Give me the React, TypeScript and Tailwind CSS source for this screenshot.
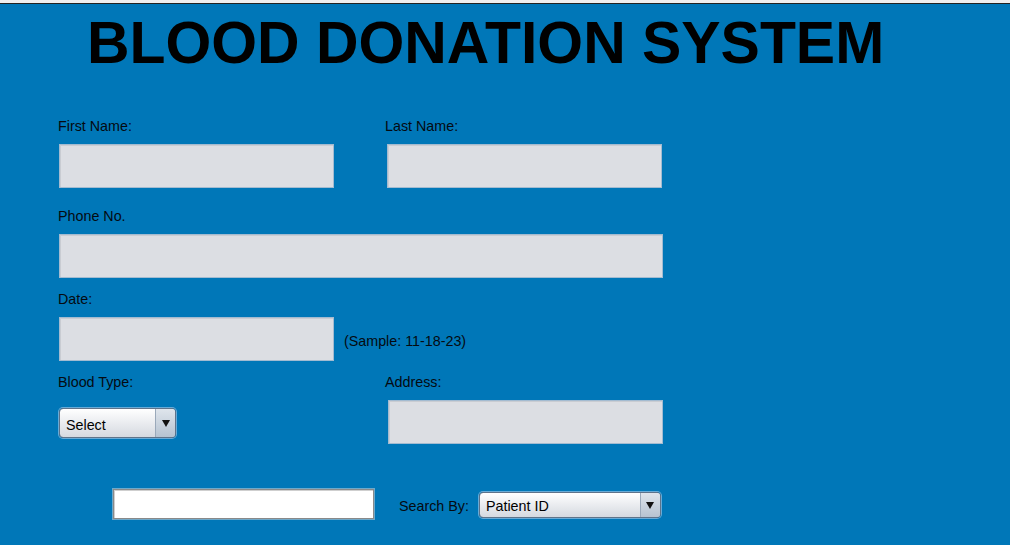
const field =
  "bg-[#dcdee3] border border-[#a3bbd1] shadow-[inset_1px_1px_0_#c9ccd2]";

function Label({ text }: { text: string }) {
  return <p className="h-4 text-[14.3px] leading-4 text-[#050a10]">{text}</p>;
}

function Dropdown({ value, width, height }: { value: string; width: string; height: string }) {
  return (
    <div
      className={`${width} ${height} flex rounded-[4px] border border-[#5f738a] bg-gradient-to-b from-[#ffffff] to-[#d5d9e0] shadow-[0_0_0_1px_rgba(190,215,240,0.55)] overflow-hidden`}
    >
      <span className="flex-1 pl-[6px] pt-[3px] flex items-center text-[14.3px] leading-4 text-black">
        {value}
      </span>
      <span className="w-[20px] flex items-center justify-center border-l border-[#9aa9ba] bg-gradient-to-b from-[#dfe5ec] to-[#b6c3d1]">
        <svg width="8" height="8" viewBox="0 0 8 8">
          <path d="M0 1 L8 1 L4 8 Z" fill="#111" />
        </svg>
      </span>
    </div>
  );
}

function App() {
  return (
    <div className="w-[1010px] h-[545px] overflow-hidden bg-[#efefef] font-['Liberation_Sans',Arial,sans-serif]">
      <div className="h-[3px] bg-[#efefef]" />
      <div className="h-px bg-[#222]" />
      <div className="h-[541px] bg-[#0077b8] pl-[58px]">
        <h1 className="pl-[29px] pt-[9px] text-[58.9px] leading-[59px] font-bold text-black">
          BLOOD DONATION SYSTEM
        </h1>

        <div className="flex mt-[46px]">
          <div className="w-[327px]">
            <Label text="First Name:" />
            <div className={`mt-[10px] ml-px w-[275px] h-[44px] ${field}`} />
          </div>
          <div>
            <Label text="Last Name:" />
            <div className={`mt-[10px] ml-[2px] w-[275px] h-[44px] ${field}`} />
          </div>
        </div>

        <div className="mt-[20px]">
          <Label text="Phone No." />
          <div className={`mt-[10px] ml-px w-[604px] h-[44px] ${field}`} />
        </div>

        <div className="mt-[13px]">
          <Label text="Date:" />
          <div className="mt-[10px] flex items-center">
            <div className={`ml-px w-[275px] h-[44px] ${field}`} />
            <span className="ml-[10px] mt-[4px] text-[14.3px] leading-4 text-[#050a10]">
              (Sample: 11-18-23)
            </span>
          </div>
        </div>

        <div className="flex mt-[13px]">
          <div className="w-[327px]">
            <Label text="Blood Type:" />
            <div className="mt-[18px] ml-px">
              <Dropdown value="Select" width="w-[117px]" height="h-[30px]" />
            </div>
          </div>
          <div>
            <Label text="Address:" />
            <div className={`mt-[10px] ml-[3px] w-[275px] h-[44px] ${field}`} />
          </div>
        </div>

        <div className="flex items-center mt-[45px] ml-[55px]">
          <div className="w-[261px] h-[30px] bg-white border border-[#8a8a8a] shadow-[inset_1px_1px_0_#cfcfcf,0_0_0_1px_rgba(220,220,220,0.5)]" />
          <span className="ml-[25px] mt-[3px] text-[14.3px] leading-4 text-[#050a10]">Search By:</span>
          <div className="ml-[10px] mt-px">
            <Dropdown value="Patient ID" width="w-[182px]" height="h-[26px]" />
          </div>
        </div>
      </div>
    </div>
  );
}

export default App;
